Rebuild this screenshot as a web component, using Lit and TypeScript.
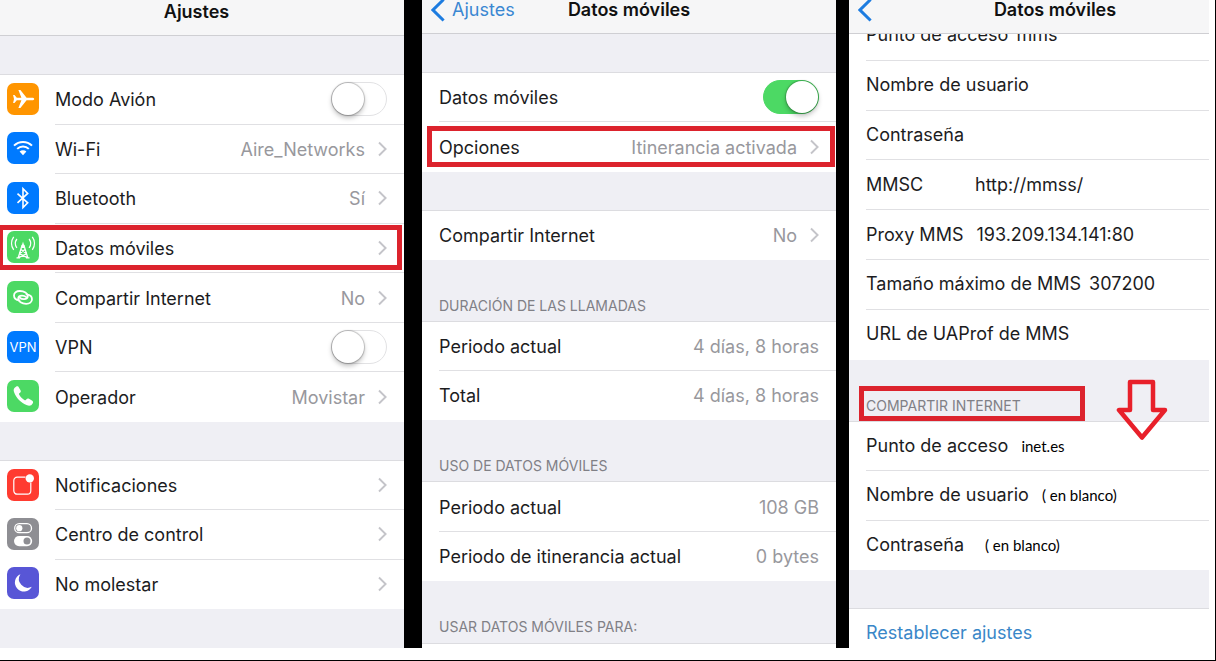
import { LitElement, html, css, svg, nothing, TemplateResult } from "lit";
import { customElement, property } from "lit/decorators.js";
import { classMap } from "lit/directives/class-map.js";

const glyphs: Record<string, TemplateResult> = {
  plane: svg`<path fill="#fff" d="M27.200 16c0-.8-1-1.300-2.200-1.300h-5.400L13.400 7h-2l3 7.700H9.800L7.500 12.100H6.100L7 16l-.9 3.900h1.400l2.300-2.600h4.600L11.400 25h2l6.200-7.700H25c1.200 0 2.200-.5 2.200-1.300z"/>`,
  wifi: svg`<g fill="none" stroke="#fff" stroke-width="2"><path d="M7 13.600a12.800 12.800 0 0 1 18 0"/><path d="M10.200 16.900a8.200 8.200 0 0 1 11.600 0"/></g><path fill="#fff" d="M12.600 19.500a4.900 4.900 0 0 1 6.800 0L16 23.300z"/>`,
  bluetooth: svg`<path fill="none" stroke="#fff" stroke-width="1.600" d="M10.500 11.600l10.200 9.200-4.700 4.700V6.700l4.700 4.700-10.200 9.400"/>`,
  antenna: svg`<g fill="none" stroke="#fff" stroke-width="1.300"><path d="M15.200 14L11.200 26.800M16.800 14L20.800 26.800M14 18.600l5.500 4.200M18 18.600l-5.500 4.200M12.600 22.800l7.800 3.800M19.400 22.800l-7.800 3.800M9.500 26.800h3.500M19 26.800h3.500"/><path d="M9.900 8a7.400 7.400 0 0 0 0 8.800M22.100 8a7.400 7.400 0 0 1 0 8.800M6.700 5.900a11 11 0 0 0 0 13M25.300 5.900a11 11 0 0 1 0 13"/></g><path fill="#fff" d="M16 10.500l2 6.500h-4z"/>`,
  link: svg`<g fill="none" stroke="#fff" stroke-width="1.800" stroke-linecap="round"><path id="half" d="M12.500 19.400C9.300 19 7 17 7 14.500c0-2.700 2.400-4.500 5.800-4.500 4.400 0 8 2.300 8 5.100 0 1.900-1.500 3-3.800 3-1.700 0-3.200-.5-4.300-1.400"/><path transform="rotate(180 16 16.400)" d="M12.500 19.400C9.300 19 7 17 7 14.500c0-2.700 2.400-4.500 5.800-4.500 4.400 0 8 2.300 8 5.100 0 1.900-1.500 3-3.800 3-1.700 0-3.200-.5-4.300-1.400"/></g>`,
  phone: svg`<path fill="#fff" d="M9 6.800c1.300-.9 2.300-.3 3 .9l1.500 2.600c.6 1.100.3 1.900-.5 2.500l-.9.700c-.3.300-.2.700 0 1.100 1.300 2.400 3.200 4.200 5.600 5.600.4.200.8.200 1.100-.1l.7-.9c.6-.8 1.500-1.100 2.500-.5l2.900 1.700c1.100.7 1.500 1.600.9 2.800-1.200 2.400-3.300 3-5.700 2.100C13.800 22.800 9.200 18.100 7 12c-.8-2.200-.2-4.100 2-5.200z"/>`,
  alert: svg`<path fill="none" stroke="#fff" stroke-width="1.200" d="M18.500 8.200H10.200a3.400 3.400 0 0 0-3.400 3.400v10.200a3.400 3.400 0 0 0 3.400 3.400h10.200a3.400 3.400 0 0 0 3.400-3.400V13.500"/><circle cx="22.800" cy="9.400" r="4.200" fill="#fff"/>`,
  control: svg`<rect x="7.700" y="5.700" width="16.800" height="9" rx="4.500" fill="none" stroke="#fff" stroke-width="1.300"/><circle cx="12.300" cy="10.200" r="3.100" fill="#fff"/><rect x="7" y="18" width="18.200" height="10.200" rx="5.100" fill="#fff"/><circle cx="20" cy="23.100" r="3.500" fill="#8e8e93"/>`,
  moon: svg`<path fill="#fff" d="M13.400 7.200a9 9 0 1 0 11.400 12.600A8.800 8.800 0 0 1 13.400 7.200z"/>`,
};

const chevron = html`<svg class="chevron" viewBox="0 0 9 16" aria-hidden="true">
  <path d="M1 1.500L7.600 8 1 14.500" fill="none" stroke="#c4c4c9" stroke-width="1.900" />
</svg>`;

const backArrow = html`<svg class="back-arrow" viewBox="0 0 14 24" aria-hidden="true">
  <path d="M12.600 1.500L2 12l10.600 10.500" fill="none" stroke="#1d7ce0" stroke-width="3" />
</svg>`;

const shared = css`
  *,
  *::before,
  *::after {
    box-sizing: border-box;
  }
  a {
    color: inherit;
    text-decoration: none;
  }
  .row {
    position: relative;
    flex: 1 1 49px;
    display: flex;
    align-items: stretch;
    padding-left: 17px;
    background: #fff;
    color: #1c1c1e;
    font-size: 18px;
    line-height: 24px;
  }
  .body {
    flex: 1;
    min-width: 0;
    display: flex;
    align-items: center;
    padding-right: 17px;
    border-bottom: 1px solid #e0e0e3;
  }
  .last .body {
    border-bottom-color: transparent;
  }
`;

@customElement("setting-row")
export class SettingRow extends LitElement {
  @property() label = "";
  @property() value = "";
  @property() icon = "";
  @property() tint = "";
  @property() kind: "link" | "switch" | "info" = "link";
  @property({ type: Boolean }) on = false;
  @property({ type: Boolean }) last = false;
  @property() mark = "";

  static styles = [
    shared,
    css`
      :host {
        flex: 1 1 49px;
        display: flex;
      }
      .with-icon {
        padding-left: 7px;
      }
      .icon {
        flex: none;
        align-self: center;
        width: 32px;
        height: 32px;
        margin: 0 16px 2px 0;
        border-radius: 7px;
        display: flex;
        align-items: center;
        justify-content: center;
        color: #fff;
        font-size: 13px;
      }
      .icon svg {
        width: 32px;
        height: 32px;
      }
      .orange { background: #ff9500; }
      .blue { background: #007aff; }
      .green { background: #4cd964; }
      .red { background: #ff3b30; }
      .grey { background: #8e8e93; }
      .purple { background: #5856d6; }
      .label,
      .value {
        padding-top: 2px;
        white-space: nowrap;
      }
      .label {
        flex: 1;
      }
      .value {
        color: #98989d;
      }
      .chevron {
        width: 9px;
        height: 16px;
        margin-left: 13px;
      }
      .switch {
        appearance: none;
        flex: none;
        width: 56px;
        height: 34px;
        margin: 0;
        padding: 1px;
        border: 1px solid #e2e2e4;
        border-radius: 17px;
        background: #fff;
        display: flex;
      }
      .switch::before {
        content: "";
        width: 32px;
        height: 32px;
        margin: -1px;
        border-radius: 50%;
        background: #fff;
        box-shadow: 0 0 1px 1px rgba(0, 0, 0, 0.2), 0 3px 5px rgba(0, 0, 0, 0.25);
      }
      .switch:checked {
        justify-content: flex-end;
        background: #4cd964;
        border-color: #4cd964;
      }
      .marked::after {
        content: "";
        position: absolute;
        z-index: 1;
        border: 5px solid #dc232d;
        pointer-events: none;
      }
      .mark-full::after {
        inset: 1px 2px 3px -2px;
      }
      .mark-inset::after {
        inset: 4px 1px 5px 5px;
      }
    `,
  ];

  render() {
    const cls = classMap({
      row: true,
      last: this.last,
      "with-icon": !!this.icon,
      marked: !!this.mark,
      ["mark-" + (this.mark || "none")]: true,
    });
    const icon = this.icon
      ? html`<span class="icon ${this.tint}" aria-hidden="true"
          >${this.icon === "vpn" ? "VPN" : html`<svg viewBox="0 0 32 32">${glyphs[this.icon]}</svg>`}</span
        >`
      : nothing;
    if (this.kind === "switch") {
      return html`<label class=${cls}
        >${icon}<span class="body"
          ><span class="label">${this.label}</span
          ><input class="switch" type="checkbox" role="switch" .checked=${this.on} /></span
      ></label>`;
    }
    const body = html`${icon}<span class="body"
        ><span class="label">${this.label}</span><span class="value">${this.value}</span>${this.kind === "link"
          ? chevron
          : nothing}</span
      >`;
    return this.kind === "link"
      ? html`<a class=${cls} href="#">${body}</a>`
      : html`<div class=${cls}>${body}</div>`;
  }
}

interface Field {
  label: string;
  value?: string;
  style?: string;
}

const mmsFields: Field[] = [
  { label: "Punto de acceso", value: "mms" },
  { label: "Nombre de usuario" },
  { label: "Contraseña" },
  { label: "MMSC", value: "http://mmss/", style: "column" },
  { label: "Proxy MMS", value: "193.209.134.141:80", style: "column" },
  { label: "Tamaño máximo de MMS", value: "307200" },
  { label: "URL de UAProf de MMS" },
];

const sharingFields: Field[] = [
  { label: "Punto de acceso", value: "inet.es", style: "note" },
  { label: "Nombre de usuario", value: "( en blanco)", style: "note" },
  { label: "Contraseña", value: "( en blanco)", style: "note wide" },
];

@customElement("app-root")
export class AppRoot extends LitElement {
  static styles = [
    shared,
    css`
      :host {
        display: block;
        font-family: Inter, "Liberation Sans", sans-serif;
        background: #fff;
      }
      .screens {
        display: grid;
        grid-template-columns: 422fr 427fr 360fr;
        min-height: 100vh;
        padding: 0 6px 12px 0;
        border-right: 1px solid #000;
        border-bottom: 1px solid #000;
        overflow: hidden;
      }
      .screen {
        display: flex;
        flex-direction: column;
        min-width: 0;
        background: #efeff4;
        overflow: hidden;
      }
      .first {
        border-right: 18px solid #000;
      }
      .second {
        border-right: 13px solid #000;
      }
      .third {
        margin-bottom: -10px;
      }
      .bar {
        flex: none;
        position: relative;
        z-index: 1;
        display: grid;
        grid-template-columns: 1fr auto 1fr;
        height: 34px;
        padding-bottom: 13px;
        align-items: center;
        background: #f6f6f7;
        border-bottom: 1px solid #cfcfd3;
        font-size: 18px;
        line-height: 20px;
      }
      .first .bar {
        height: 36px;
        padding-right: 11px;
        padding-bottom: 11px;
      }
      .third .bar {
        padding-left: 52px;
      }
      .third .back {
        margin-left: -43px;
      }
      h1 {
        grid-column: 2;
        margin: 0;
        font-size: 18px;
        font-weight: 600;
        color: #111;
      }
      .back {
        display: flex;
        align-items: center;
        gap: 7px;
        margin-left: 9px;
        color: #3a87d2;
      }
      .back-arrow {
        width: 14px;
        height: 24px;
        margin: -2px 0;
      }
      .group {
        display: flex;
        flex-direction: column;
        border-top: 1px solid #dcdce0;
        margin-top: -1px;
      }
      .rows-7 { flex: 7 1 343px; }
      .rows-3 { flex: 3 1 147px; }
      .rows-2 { flex: 2 1 98px; }
      .rows-1 { flex: 1 1 49px; }
      .gap {
        flex: none;
        height: 39px;
      }
      .caption {
        flex: none;
        position: relative;
        display: flex;
        align-items: flex-end;
        height: 62px;
        margin: 0;
        padding: 0 17px 6px;
        font-size: 14px;
        font-weight: 400;
        line-height: 20px;
        color: #808086;
      }
      .boxed::after {
        content: "";
        position: absolute;
        top: 26px;
        bottom: 1px;
        left: 10px;
        width: 226px;
        border: 5px solid #dc232d;
      }
      .arrow {
        position: absolute;
        top: 18px;
        right: 41px;
        width: 52px;
        height: 64px;
        z-index: 2;
      }
      .edge {
        flex: none;
        height: 5px;
        background: #fff;
        border-top: 1px solid #dcdce0;
      }
      .scrolled {
        margin-top: -23px;
        border-top: 0;
      }
      .field label {
        flex: none;
      }
      .field .body {
        gap: 8px;
        padding-right: 0;
      }
      .field input {
        flex: 1;
        min-width: 0;
        height: 24px;
        padding: 0;
        border: 0;
        outline: 0;
        background: transparent;
        font: inherit;
        color: inherit;
      }
      .column .body,
      .note .body {
        gap: 13px;
      }
      .column label {
        min-width: 96px;
      }
      .wide label {
        min-width: 106px;
      }
      .note input {
        font-family: Lato, sans-serif;
        font-size: 15px;
        color: #000;
      }
      .action {
        color: #3a87c8;
      }
    `,
  ];

  private fields(list: Field[], prefix: string) {
    return list.map(
      (f, i) => html`<div class="row field ${f.style ?? ""} ${i === list.length - 1 ? "last" : ""}">
        <div class="body">
          <label for=${prefix + i}>${f.label}</label>
          <input id=${prefix + i} type="text" .value=${f.value ?? ""} />
        </div>
      </div>`
    );
  }

  render() {
    return html`<main class="screens">
      <section class="screen first">
        <header class="bar"><h1>Ajustes</h1></header>
        <div class="gap"></div>
        <div class="group rows-7">
          <setting-row icon="plane" tint="orange" label="Modo Avión" kind="switch"></setting-row>
          <setting-row icon="wifi" tint="blue" label="Wi-Fi" value="Aire_Networks"></setting-row>
          <setting-row icon="bluetooth" tint="blue" label="Bluetooth" value="Sí"></setting-row>
          <setting-row icon="antenna" tint="green" label="Datos móviles" mark="full"></setting-row>
          <setting-row icon="link" tint="green" label="Compartir Internet" value="No"></setting-row>
          <setting-row icon="vpn" tint="blue" label="VPN" kind="switch"></setting-row>
          <setting-row icon="phone" tint="green" label="Operador" value="Movistar" last></setting-row>
        </div>
        <div class="gap"></div>
        <div class="group rows-3">
          <setting-row icon="alert" tint="red" label="Notificaciones"></setting-row>
          <setting-row icon="control" tint="grey" label="Centro de control"></setting-row>
          <setting-row icon="moon" tint="purple" label="No molestar" last></setting-row>
        </div>
        <div class="gap"></div>
      </section>

      <section class="screen second">
        <header class="bar">
          <a class="back" href="#">${backArrow}<span>Ajustes</span></a>
          <h1>Datos móviles</h1>
        </header>
        <div class="gap"></div>
        <div class="group rows-2">
          <setting-row label="Datos móviles" kind="switch" on></setting-row>
          <setting-row label="Opciones" value="Itinerancia activada" mark="inset" last></setting-row>
        </div>
        <div class="gap"></div>
        <div class="group rows-1">
          <setting-row label="Compartir Internet" value="No" last></setting-row>
        </div>
        <h2 class="caption">DURACIÓN DE LAS LLAMADAS</h2>
        <div class="group rows-2">
          <setting-row label="Periodo actual" value="4 días, 8 horas" kind="info"></setting-row>
          <setting-row label="Total" value="4 días, 8 horas" kind="info" last></setting-row>
        </div>
        <h2 class="caption">USO DE DATOS MÓVILES</h2>
        <div class="group rows-2">
          <setting-row label="Periodo actual" value="108 GB" kind="info"></setting-row>
          <setting-row label="Periodo de itinerancia actual" value="0 bytes" kind="info" last></setting-row>
        </div>
        <h2 class="caption">USAR DATOS MÓVILES PARA:</h2>
        <div class="edge"></div>
      </section>

      <section class="screen third">
        <header class="bar">
          <a class="back" href="#" aria-label="Ajustes">${backArrow}</a>
          <h1>Datos móviles</h1>
        </header>
        <div class="group rows-7 scrolled">${this.fields(mmsFields, "mms")}</div>
        <h2 class="caption boxed">
          COMPARTIR INTERNET
          <svg class="arrow" viewBox="0 0 52 64" aria-hidden="true">
            <path
              d="M14 4h23v28h12L26 59.500 3 32h11z"
              fill="none"
              stroke="#e8202a"
              stroke-width="4.500"
              stroke-linejoin="round"
            />
          </svg>
        </h2>
        <div class="group rows-3">${this.fields(sharingFields, "share")}</div>
        <div class="gap"></div>
        <div class="group rows-1">
          <a class="row action last" href="#"><span class="body">Restablecer ajustes</span></a>
        </div>
      </section>
    </main>`;
  }
}
